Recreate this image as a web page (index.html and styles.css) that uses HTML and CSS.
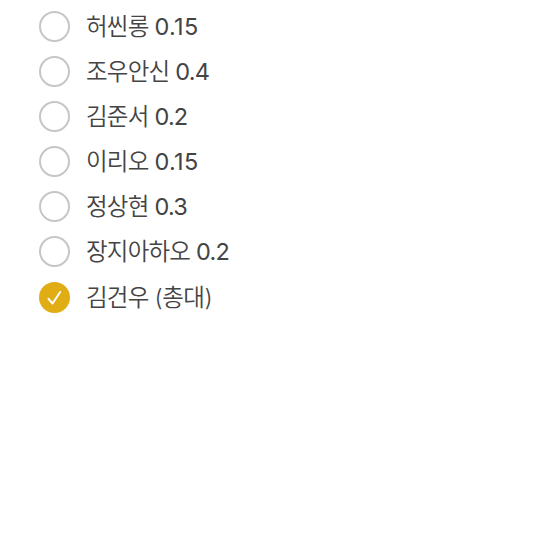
FILE: index.html
```
<!DOCTYPE html>
<html lang="ko">
<head>
    <meta charset="UTF-8">
    <title>체크리스트</title>
    <link rel="stylesheet" href="styles.css">
</head>
<body>
<ul class="list">
    <li class="item"><span class="circle"></span><span class="name">허씬롱</span><span class="num long">0.15</span></li>
    <li class="item"><span class="circle"></span><span class="name">조우안신</span><span class="num">0.4</span></li>
    <li class="item"><span class="circle"></span><span class="name">김준서</span><span class="num">0.2</span></li>
    <li class="item"><span class="circle"></span><span class="name">이리오</span><span class="num long">0.15</span></li>
    <li class="item"><span class="circle"></span><span class="name">정상현</span><span class="num">0.3</span></li>
    <li class="item"><span class="circle"></span><span class="name">장지아하오</span><span class="num">0.2</span></li>
    <li class="item">
        <span class="circle checked">
            <svg class="check" viewBox="0 0 31 31"><path d="M9.5 16.8l4 4.7 7.7-11.5"/></svg>
        </span>
        <span class="name">김건우</span><span class="role">(총대)</span>
    </li>
</ul>
</body>
</html>
```
FILE: styles.css
```
* {
    margin: 0;
    padding: 0;
    box-sizing: border-box;
}
body {
    background-color: #fff;
    color: #444;
    font-family: Inter, "Noto Sans CJK KR", sans-serif;
    font-size: 23.5px;
    font-weight: 350;
}
.list {
    list-style: none;
    padding: 4px 0 0 38.5px;
}
.item {
    display: flex;
    align-items: center;
    height: 45.08px;
    line-height: 45px;
    white-space: nowrap;
}
.item:last-child {
    height: 46px;
}
.circle {
    width: 31px;
    height: 31px;
    margin-right: 16.5px;
    border: 2px solid #c6c6c6;
    border-radius: 50%;
}
.checked {
    border: none;
    background-color: #e0ad14;
}
.check {
    display: block;
    fill: none;
    stroke: #fff;
    stroke-width: 2;
    stroke-linecap: round;
    stroke-linejoin: round;
}
.name {
    margin-right: 6px;
    letter-spacing: -0.8px;
}
.num {
    font-weight: 400;
    letter-spacing: -0.8px;
}
.long {
    letter-spacing: 0.3px;
}
.role {
    letter-spacing: -0.5px;
}
```
